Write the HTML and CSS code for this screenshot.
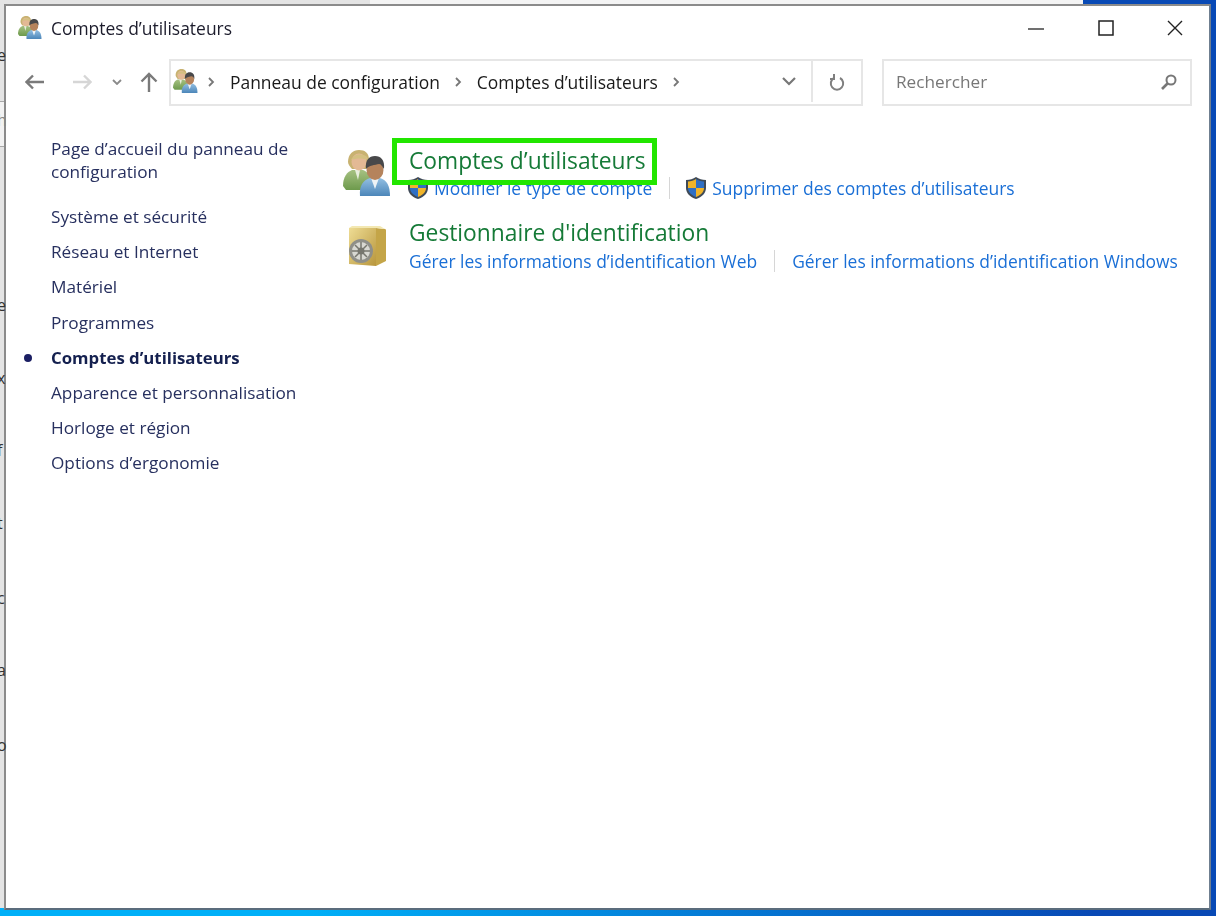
FILE: index.html
```html
<!doctype html>
<html lang="fr">
  <head>
    <meta charset="UTF-8" />
    <title>Comptes d’utilisateurs</title>
    <link rel="stylesheet" href="styles.css">
  </head>
  <body>
    <svg class="icon-defs" width="0" height="0">
      <defs>
        <linearGradient id="green-body" x1="0" y1="0" x2="0" y2="1">
          <stop offset="0" stop-color="#a6c182" />
          <stop offset="1" stop-color="#6d9a4c" />
        </linearGradient>
        <linearGradient id="blue-body" x1="0" y1="0" x2="0" y2="1">
          <stop offset="0" stop-color="#93bfe2" />
          <stop offset="1" stop-color="#4c86b9" />
        </linearGradient>
        <linearGradient id="safe-front" x1="0" y1="0" x2="1" y2="1">
          <stop offset="0" stop-color="#eedc94" />
          <stop offset="1" stop-color="#b8963c" />
        </linearGradient>
        <symbol id="users" viewBox="0 0 48 48">
          <path d="M0 36c0-9 4-14 9-16h11c5 2 8 6 8 12l-4 8H3z" fill="url(#green-body)" />
          <path d="M12 20h5l-2 10z" fill="#e8eedd" />
          <path d="M5 12C5 4 10 0 16 0s10 3 10 10c0 3-1 7-3 9H9C7 17 5 14 5 12z" fill="#c8b271" />
          <ellipse cx="16" cy="12" rx="7.500" ry="8.500" fill="#e3b995" />
          <path d="M8 10c2-5 9-7 15-4 1 1 2 2 2 4-5-2-12-2-17 0z" fill="#d4c081" />
          <path d="M17 46c-1-10 3-16 10-18h10c7 2 10 8 10 18z" fill="url(#blue-body)" />
          <path d="M28 28h8l-4 11z" fill="#eef3f6" />
          <ellipse cx="32" cy="20" rx="8.500" ry="10" fill="#b5835c" />
          <path d="M23 19c-1-9 3-13 9-13s10 4 9 13c-2-3-3-5-5-5-4 1-10 1-13 5z" fill="#48484a" />
        </symbol>
        <symbol id="uac-shield" viewBox="0 0 24 24">
          <path d="M12 1c3 2 6 3 10 3v8c0 5-4 9-10 11C6 21 2 17 2 12V4c4 0 7-1 10-3z" fill="#3f4a57" />
          <path d="M12 3v9H4V5.500c3 0 6-1 8-2.500z" fill="#f0b429" />
          <path d="M12 3c2 1.500 5 2.500 8 2.500V12h-8z" fill="#2f6fc4" />
          <path d="M12 12h8c0 4-3 7-8 9z" fill="#f0b429" />
          <path d="M12 12H4c0 4 3 7 8 9z" fill="#2f6fc4" />
        </symbol>
        <symbol id="safe" viewBox="0 0 48 48">
          <path d="M33 6l9 1c1 0 1 1 1 2v30l-10 5z" fill="#c4a548" />
          <path d="M6 6l27 0v38L6 42z" fill="url(#safe-front)" />
          <path d="M6 6l3-2h28l5 3-9-1z" fill="#f3e8b2" />
          <circle cx="18" cy="29" r="12" fill="#8f8f88" />
          <circle cx="18" cy="29" r="9" fill="#d8d8d2" />
          <circle cx="18" cy="29" r="3.500" fill="#77776f" />
          <path d="M18 20v18M9 29h18M12 23l12 12M24 23L12 35" stroke="#77776f" stroke-width="1.500" />
        </symbol>
      </defs>
    </svg>

    <div class="desktop">
      <div class="back-window">
        <span class="back-glyph glyph-1">e</span>
        <span class="back-glyph glyph-9">h</span>
        <span class="back-glyph glyph-2">e</span>
        <span class="back-glyph glyph-3">x</span>
        <span class="back-glyph glyph-4">f</span>
        <span class="back-glyph glyph-5">t</span>
        <span class="back-glyph glyph-6">c</span>
        <span class="back-glyph glyph-7">a</span>
        <span class="back-glyph glyph-8">o</span>
        <div class="back-row"></div>
      </div>
      <div class="back-strip"></div>

      <div class="window">
        <div class="title-bar">
          <svg class="title-icon"><use href="#users" /></svg>
          <span class="title-text">Comptes d’utilisateurs</span>
          <div class="window-buttons">
            <button class="window-btn">
              <svg width="16" height="16" viewBox="0 0 16 16"><path d="M0 9h16" stroke="#222" stroke-width="1.300" fill="none" /></svg>
            </button>
            <button class="window-btn">
              <svg width="16" height="16" viewBox="0 0 16 16"><rect x="1" y="1" width="14" height="14" stroke="#222" stroke-width="1.500" fill="none" /></svg>
            </button>
            <button class="window-btn">
              <svg width="16" height="16" viewBox="0 0 16 16"><path d="M1 1l14 14M15 1L1 15" stroke="#222" stroke-width="1.400" fill="none" /></svg>
            </button>
          </div>
        </div>

        <div class="nav-bar">
          <div class="nav-arrows">
            <svg class="nav-back" width="20" height="16" viewBox="0 0 20 16"><path d="M1.500 8H19M8 1.500L1.500 8 8 14.500" stroke="#7a7a7a" stroke-width="2.400" fill="none" /></svg>
            <svg class="nav-forward" width="20" height="16" viewBox="0 0 20 16"><path d="M1 8h17.500M12 1.500L18.500 8 12 14.500" stroke="#d6d6d6" stroke-width="2.400" fill="none" /></svg>
            <svg class="nav-recent" width="10" height="6" viewBox="0 0 10 6"><path d="M1 1l4 4 4-4" stroke="#8a8a8a" stroke-width="1.800" fill="none" /></svg>
            <svg class="nav-up" width="18" height="20" viewBox="0 0 18 20"><path d="M9 20V2M1.500 9.500L9 2l7.500 7.500" stroke="#7a7a7a" stroke-width="2.400" fill="none" /></svg>
          </div>
          <div class="address-bar">
            <svg class="address-icon"><use href="#users" /></svg>
            <svg class="crumb-sep first-sep" width="7" height="10" viewBox="0 0 7 10"><path d="M1 1l4 4-4 4" stroke="#777" stroke-width="1.800" fill="none" /></svg>
            <span class="crumb">Panneau de configuration</span>
            <svg class="crumb-sep" width="7" height="10" viewBox="0 0 7 10"><path d="M1 1l4 4-4 4" stroke="#777" stroke-width="1.800" fill="none" /></svg>
            <span class="crumb">Comptes d’utilisateurs</span>
            <svg class="crumb-sep" width="7" height="10" viewBox="0 0 7 10"><path d="M1 1l4 4-4 4" stroke="#777" stroke-width="1.800" fill="none" /></svg>
            <svg class="address-drop" width="14" height="9" viewBox="0 0 14 9"><path d="M1 1l6 6 6-6" stroke="#777" stroke-width="2.200" fill="none" /></svg>
            <div class="refresh">
              <svg width="16" height="18" viewBox="0 0 16 18"><path d="M5 5a6.200 6.200 0 1 0 6 0M5 1v5H1" stroke="#7f7f7f" stroke-width="2" fill="none" /></svg>
            </div>
          </div>
          <div class="search-box">
            <span class="search-text">Rechercher</span>
            <svg width="18" height="18" viewBox="0 0 18 18"><circle cx="11" cy="7" r="4.500" stroke="#777" stroke-width="2" fill="none" /><path d="M7.500 10.500L2 16" stroke="#777" stroke-width="2.600" /></svg>
          </div>
        </div>

        <div class="content">
          <ul class="side-nav">
            <li class="side-home">Page d’accueil du panneau de configuration</li>
            <li>Système et sécurité</li>
            <li>Réseau et Internet</li>
            <li>Matériel</li>
            <li>Programmes</li>
            <li class="side-current">Comptes d’utilisateurs</li>
            <li>Apparence et personnalisation</li>
            <li>Horloge et région</li>
            <li>Options d’ergonomie</li>
          </ul>

          <div class="panel">
            <section class="group group-accounts">
              <svg class="group-icon"><use href="#users" /></svg>
              <div>
                <h2 class="group-title">Comptes d’utilisateurs</h2>
                <div class="group-links">
                  <svg class="shield"><use href="#uac-shield" /></svg>
                  <a class="task">Modifier le type de compte</a>
                  <span class="link-sep"></span>
                  <svg class="shield"><use href="#uac-shield" /></svg>
                  <a class="task">Supprimer des comptes d’utilisateurs</a>
                </div>
              </div>
            </section>
            <section class="group group-vault">
              <svg class="group-icon"><use href="#safe" /></svg>
              <div>
                <h2 class="group-title">Gestionnaire d'identification</h2>
                <div class="group-links">
                  <a class="task">Gérer les informations d’identification Web</a>
                  <span class="link-sep"></span>
                  <a class="task">Gérer les informations d’identification Windows</a>
                </div>
              </div>
            </section>
          </div>
        </div>

        <div class="highlight-box"></div>
      </div>
    </div>
  </body>
</html>
```

FILE: styles.css
```css
* {
  margin: 0;
  padding: 0;
  box-sizing: border-box;
}

body {
  font-family: "Open Sans", "Noto Sans", sans-serif;
  background-color: #0a45c0;
  overflow: hidden;
}

.icon-defs {
  position: absolute;
}

.desktop {
  position: relative;
  width: 1216px;
  height: 916px;
  overflow: hidden;
  background: linear-gradient(90deg, #00b0f8 25%, #0849b5 90%);
}

/* windows behind the main one */
.back-window {
  position: absolute;
  left: 0;
  top: 0;
  width: 370px;
  height: 908px;
  background-color: #e4e4e4;
}

.back-row {
  position: absolute;
  left: 0;
  top: 101px;
  width: 100%;
  height: 46px;
  background-color: #f2f2f2;
  border-top: 1px solid #a8a8a8;
  border-bottom: 1px solid #a8a8a8;
}

.back-strip {
  position: absolute;
  left: 370px;
  top: 0;
  width: 713px;
  height: 8px;
  background-color: #f4f4f4;
}

.back-glyph {
  position: absolute;
  z-index: 1;
  left: -3px;
  font-size: 16px;
  line-height: 20px;
  color: #333;
}

.glyph-1 { top: 45px; }
.glyph-9 { top: 110px; color: #888; }
.glyph-2 { top: 295px; }
.glyph-3 { top: 368px; }
.glyph-4 { top: 440px; }
.glyph-5 { top: 513px; }
.glyph-6 { top: 588px; }
.glyph-7 { top: 660px; }
.glyph-8 { top: 735px; }

.window {
  position: absolute;
  left: 4px;
  top: 4px;
  width: 1207px;
  height: 906px;
  background-color: white;
  border: 2px solid #8b8b8b;
  border-right-color: #6f7f90;
  border-bottom-color: #5b6c7c;
  filter: blur(0.35px);
}

.title-bar {
  display: flex;
  align-items: center;
  height: 44px;
  padding-left: 12px;
}

.title-icon {
  width: 24px;
  height: 24px;
  margin-right: 9px;
}

.title-text {
  font-size: 17.450px;
  color: #1c1c2c;
}

.window-buttons {
  display: flex;
  margin-left: auto;
  margin-right: -1px;
}

.window-btn {
  display: flex;
  align-items: center;
  justify-content: center;
  width: 69.500px;
  height: 44px;
  border: none;
  background: none;
}

.nav-bar {
  display: flex;
  align-items: center;
  height: 47px;
  margin-top: 9px;
}

.nav-arrows {
  display: flex;
  align-items: center;
  width: 163px;
  padding-left: 19px;
  padding-bottom: 2px;
}

.nav-forward {
  margin-left: 27px;
}

.nav-recent {
  margin-left: 20px;
}

.nav-up {
  margin-left: 18px;
}

.address-bar {
  display: flex;
  align-items: center;
  width: 694px;
  height: 47px;
  padding-left: 2px;
  padding-bottom: 2px;
  border: 2px solid #e6e6e6;
}

.address-icon {
  width: 25px;
  height: 25px;
}

.crumb-sep {
  margin-left: 15px;
  margin-right: 15px;
}

.first-sep {
  margin-left: 10px;
  margin-right: 15px;
}

.crumb {
  font-size: 17.450px;
  color: #1a1a1a;
}

.address-drop {
  margin-left: auto;
  margin-right: 15px;
}

.refresh {
  display: flex;
  align-items: center;
  justify-content: center;
  width: 50px;
  height: 100%;
  border-left: 2px solid #e6e6e6;
}

.search-box {
  display: flex;
  align-items: center;
  justify-content: space-between;
  width: 310px;
  height: 47px;
  margin-left: 19px;
  padding: 0 12px 2px;
  border: 2px solid #e6e6e6;
}

.search-text {
  font-size: 17.200px;
  color: #777;
}

.content {
  display: flex;
  padding-top: 31px;
}

.side-nav {
  width: 337px;
  padding-left: 45px;
  list-style: none;
  font-size: 17.200px;
  line-height: 23px;
  color: #27305f;
}

.side-nav li {
  margin-bottom: 12.200px;
}

.side-nav .side-home {
  width: 262px;
  margin-bottom: 22px;
}

.side-current {
  position: relative;
  font-weight: 700;
  font-size: 16.800px;
  color: #14204f;
}

.side-current::before {
  content: "";
  position: absolute;
  left: -27px;
  top: 8px;
  width: 8px;
  height: 8px;
  border-radius: 50%;
  background-color: #1b1f63;
}

.panel {
  padding-top: 9px;
}

.group {
  display: flex;
}

.group-accounts {
  margin-bottom: 18px;
}

.group-icon {
  flex-shrink: 0;
  width: 48px;
  height: 48px;
  margin-top: 4px;
  margin-right: 18px;
}

.group-title {
  font-size: 22.800px;
  font-weight: 400;
  line-height: 30px;
  color: #157a37;
}

.group-links {
  display: flex;
  align-items: center;
  height: 24px;
  font-size: 17.450px;
  color: #1a6fd6;
}

.group-vault .group-links {
  height: 25px;
}

.shield {
  flex-shrink: 0;
  width: 24px;
  height: 24px;
  margin-left: -3px;
  margin-right: 4px;
}

.link-sep {
  width: 1px;
  height: 22px;
  margin: 0 17px;
  background-color: #d6d6d6;
}

/* annotation drawn over the screenshot */
.highlight-box {
  position: absolute;
  left: 386px;
  top: 132px;
  width: 265px;
  height: 47px;
  border: 5px solid #22e600;
}
```
